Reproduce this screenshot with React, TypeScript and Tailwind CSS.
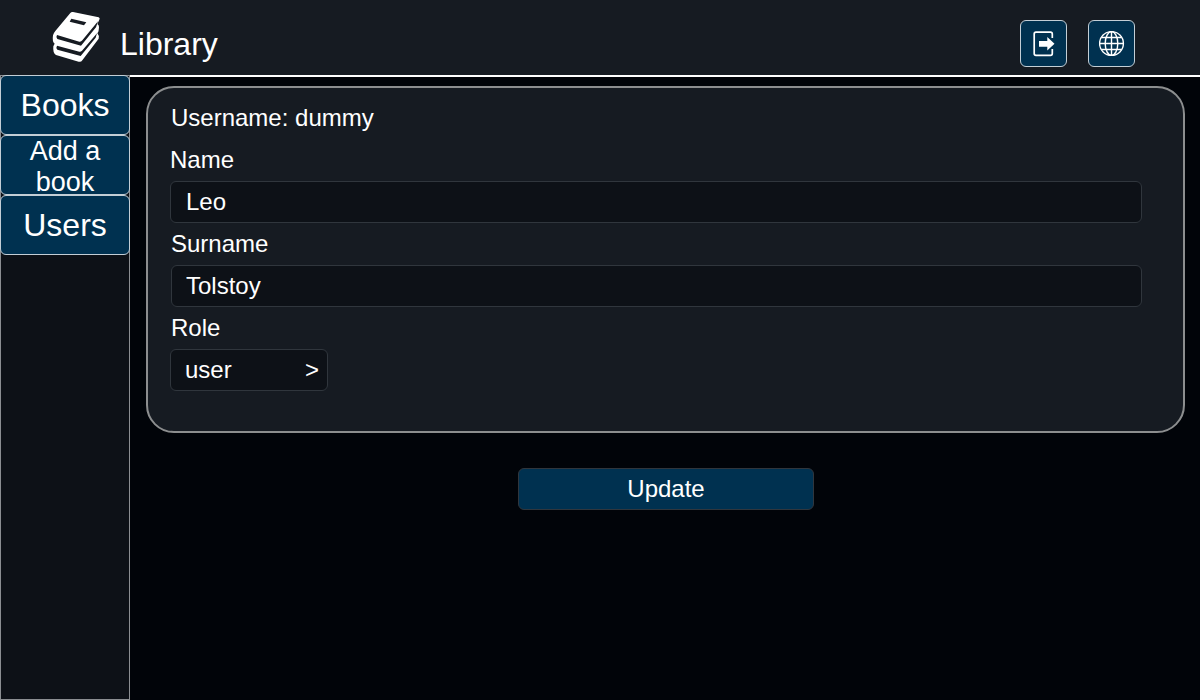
import type { ReactNode } from 'react';

function BooksLogo() {
  return (
    <svg className="ml-[48px] mt-[8px] h-[58px] w-[56px] shrink-0" viewBox="0 0 168 174">
      <path d="M75 12 L152 28 Q157 30 154 35 L148 48 Q154 52 153 58 L152 67 Q152 71 148 76 Q154 82 152 92 L103 157 Q99 163 92 161 L24 141 Q14 136 16 115 L20 107 Q12 102 15 82 Q17 75 22 69 L67 15 Q70 11 75 12 Z" fill="#fff" />
      <path d="M70 32 L65 41 L108 52 L115 43 Z" fill="#161b22" />
      <path d="M27 81 L94 101 Q99 102 103 97 L150 40 L144 58 L99 113 L28 93 Q23 87 27 81 Z" fill="#161b22" />
      <path d="M27 113 L94 131 Q98 132 102 128 L147 76 L143 89 L98 144 L28 125 Q23 119 27 113 Z" fill="#161b22" />
    </svg>
  );
}

function ExitIcon() {
  return (
    <svg className="h-[26px] w-[22px]" viewBox="0 0 22 26" fill="none" stroke="#fff" strokeWidth="1.7">
      <path d="M19.3 7V3Q19.3 1.2 17.5 1.2H3Q1.2 1.2 1.2 3V22.5Q1.2 24.3 3 24.3H17.5Q19.3 24.3 19.3 22.5V18" />
      <path d="M6 9.9h8.3V6l7.2 6.7-7.2 6.7v-3.7H6z" fill="#fff" stroke="none" />
    </svg>
  );
}

function GlobeIcon() {
  return (
    <svg className="h-[26px] w-[26px]" viewBox="0 0 26 26" fill="none" stroke="#fff" strokeWidth="1.4">
      <circle cx="12.5" cy="12.5" r="11.9" />
      <ellipse cx="12.5" cy="12.5" rx="6.3" ry="11.9" />
      <path d="M12.5 .5v24M.5 12.5h24M2.5 6.5h20M2.5 18.5h20" />
    </svg>
  );
}

function IconButton({ label, children }: { label: string; children: ReactNode }) {
  return (
    <button aria-label={label} className="flex h-[47px] w-[47px] items-center justify-center rounded-[6px] border border-[#c3ced6] bg-[#003150]">
      {children}
    </button>
  );
}

const navClass = 'flex h-[60px] w-[130px] items-center justify-center rounded-[6px] border border-[#c3ced6] bg-[#003150] text-center';

export default function App() {
  return (
    <div className="flex h-[700px] w-[1200px] flex-col overflow-hidden bg-[#010409] font-['Liberation_Sans',Arial,sans-serif] text-2xl text-white">
      <header className="flex h-[75px] shrink-0 bg-[#161b22]">
        <BooksLogo />
        <h1 className="ml-4 mt-[20px] text-[32px] leading-[48px]">Library</h1>
        <div className="ml-auto mr-[65px] mt-5 flex gap-[21px]">
          <IconButton label="Log out"><ExitIcon /></IconButton>
          <IconButton label="Language"><GlobeIcon /></IconButton>
        </div>
      </header>
      <div className="flex h-[625px]">
        <nav className="flex w-[130px] shrink-0 flex-col bg-[#0d1117] shadow-[inset_0_0_0_1px_#8b8e92]">
          <button className={`${navClass} text-[32px]`}>Books</button>
          <button className={`${navClass} px-5 pt-1 text-[27px] leading-[31px]`}>Add a book</button>
          <button className={`${navClass} text-[32px]`}>Users</button>
        </nav>
        <main className="flex grow flex-col items-center border-t-2 border-white">
          <section className="ml-[1px] mt-[9px] h-[347px] w-[1039px] rounded-[28px] border-2 border-[#8c8e8f] bg-[#161b22] pl-[22px] pt-[9px] leading-[42px]">
            <p className="pl-[1px]">Username: dummy</p>
            <label className="block">Name</label>
            <input className="block h-[42px] w-[972px] rounded-[6px] border border-[#30363d] bg-[#0d1117] px-[15px]" defaultValue="Leo" />
            <label className="block pl-[1px]">Surname</label>
            <input className="ml-[1px] block h-[42px] w-[971px] rounded-[6px] border border-[#30363d] bg-[#0d1117] px-[14px]" defaultValue="Tolstoy" />
            <label className="block pl-[1px]">Role</label>
            <button className="flex h-[42px] w-[158px] items-center justify-between rounded-[6px] border border-[#30363d] bg-[#0d1117] pl-[14px] pr-[8px]">
              <span>user</span>
              <span>&gt;</span>
            </button>
          </section>
          <button className="ml-[2px] mt-[35px] h-[42px] w-[296px] rounded-[6px] border border-[#30363d] bg-[#003150]">Update</button>
        </main>
      </div>
    </div>
  );
}
